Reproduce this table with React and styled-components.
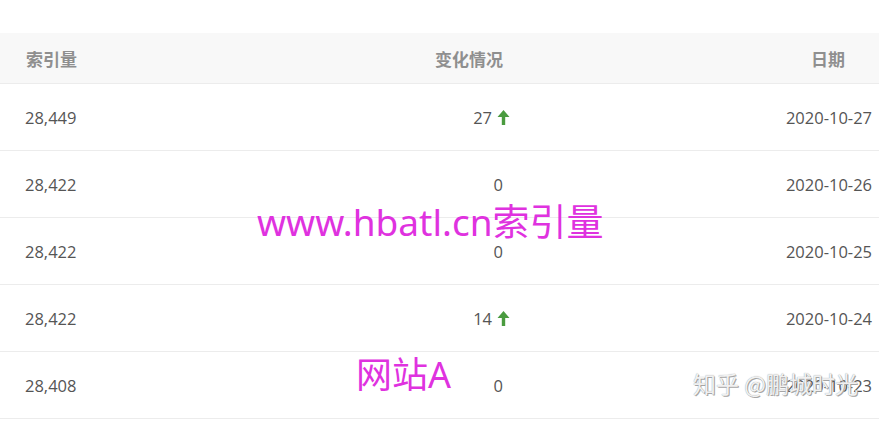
import styled, { createGlobalStyle } from "styled-components";

const GlobalStyle = createGlobalStyle`
  html, body {
    margin: 0;
    padding: 0;
    background: #fff;
  }
  body {
    font-family: "Open Sans", "Noto Sans CJK SC", sans-serif;
    overflow: hidden;
  }
`;

const rows = [
  { count: "28,449", change: "27", up: true, date: "2020-10-27" },
  { count: "28,422", change: "0", up: false, date: "2020-10-26" },
  { count: "28,422", change: "0", up: false, date: "2020-10-25" },
  { count: "28,422", change: "14", up: true, date: "2020-10-24" },
  { count: "28,408", change: "0", up: false, date: "2020-10-23" },
];

export default function App() {
  return (
    <>
      <GlobalStyle />
      <Page>
        <Table>
          <HeaderRow>
            <HeadCell>索引量</HeadCell>
            <HeadCell $align="right">变化情况</HeadCell>
            <HeadCell $align="right" $pad={34}>日期</HeadCell>
          </HeaderRow>
          {rows.map((row, i) => (
            <Row key={i}>
              <Cell>{row.count}</Cell>
              <Cell $align="right">
                {row.change}
                {row.up && (
                  <Arrow viewBox="0 0 13 15">
                    <path d="M6.5 0 L12.5 7 L8.2 7 L8.2 15 L4.8 15 L4.8 7 L0.5 7 Z" fill="#4a9b3f" />
                  </Arrow>
                )}
              </Cell>
              <Cell $align="right" $pad={7}>{row.date}</Cell>
            </Row>
          ))}
        </Table>
        <Watermark $left={257} $top={203} $size={37}>www.hbatl.cn索引量</Watermark>
        <Watermark $left={356} $top={357} $size={36}>网站A</Watermark>
        <ZhihuMark>知乎 @鹏城时光</ZhihuMark>
      </Page>
    </>
  );
}

const Page = styled.div`
  position: relative;
  width: 879px;
  height: 428px;
  padding-top: 33px;
  box-sizing: border-box;
`;

const Table = styled.div`
  display: flex;
  flex-direction: column;
`;

const HeaderRow = styled.div`
  display: grid;
  grid-template-columns: 300px 204px 1fr;
  height: 50px;
  align-items: center;
  background: #f8f8f8;
  border-bottom: 1px solid #ececec;
`;

const Row = styled.div`
  display: grid;
  grid-template-columns: 300px 204px 1fr;
  height: 67px;
  padding-top: 1px;
  box-sizing: border-box;
  align-items: center;
  border-bottom: 1px solid #ececec;
`;

const HeadCell = styled.div`
  font-family: "Noto Sans CJK SC", sans-serif;
  font-size: 17px;
  font-weight: 700;
  color: #8f8f8f;
  text-align: ${(p) => p.$align || "left"};
  padding: ${(p) => (p.$align === "right" ? `0 ${p.$pad ?? 1}px 0 0` : "0 0 0 26px")};
`;

const Cell = styled.div`
  font-size: 16.5px;
  color: #555;
  text-align: ${(p) => p.$align || "left"};
  padding: ${(p) => (p.$align === "right" ? `0 ${p.$pad ?? 1}px 0 0` : "0 0 0 25px")};
  white-space: nowrap;
`;

const Arrow = styled.svg`
  width: 13px;
  height: 15px;
  margin-left: 5px;
  margin-right: -7px;
  vertical-align: -1px;
`;

const Watermark = styled.div`
  position: absolute;
  left: ${(p) => p.$left}px;
  top: ${(p) => p.$top}px;
  font-family: "Noto Sans", "Noto Sans CJK SC", sans-serif;
  font-size: ${(p) => p.$size}px;
  line-height: 1;
  color: #df32df;
  white-space: nowrap;
`;

const ZhihuMark = styled.div`
  position: absolute;
  left: 693px;
  top: 372px;
  font-family: "Noto Sans CJK SC", sans-serif;
  font-size: 23px;
  line-height: 1;
  color: rgba(255, 255, 255, 0.9);
  text-shadow: 0 0 1px #888, 1px 1px 0 #aaa;
  white-space: nowrap;
`;
